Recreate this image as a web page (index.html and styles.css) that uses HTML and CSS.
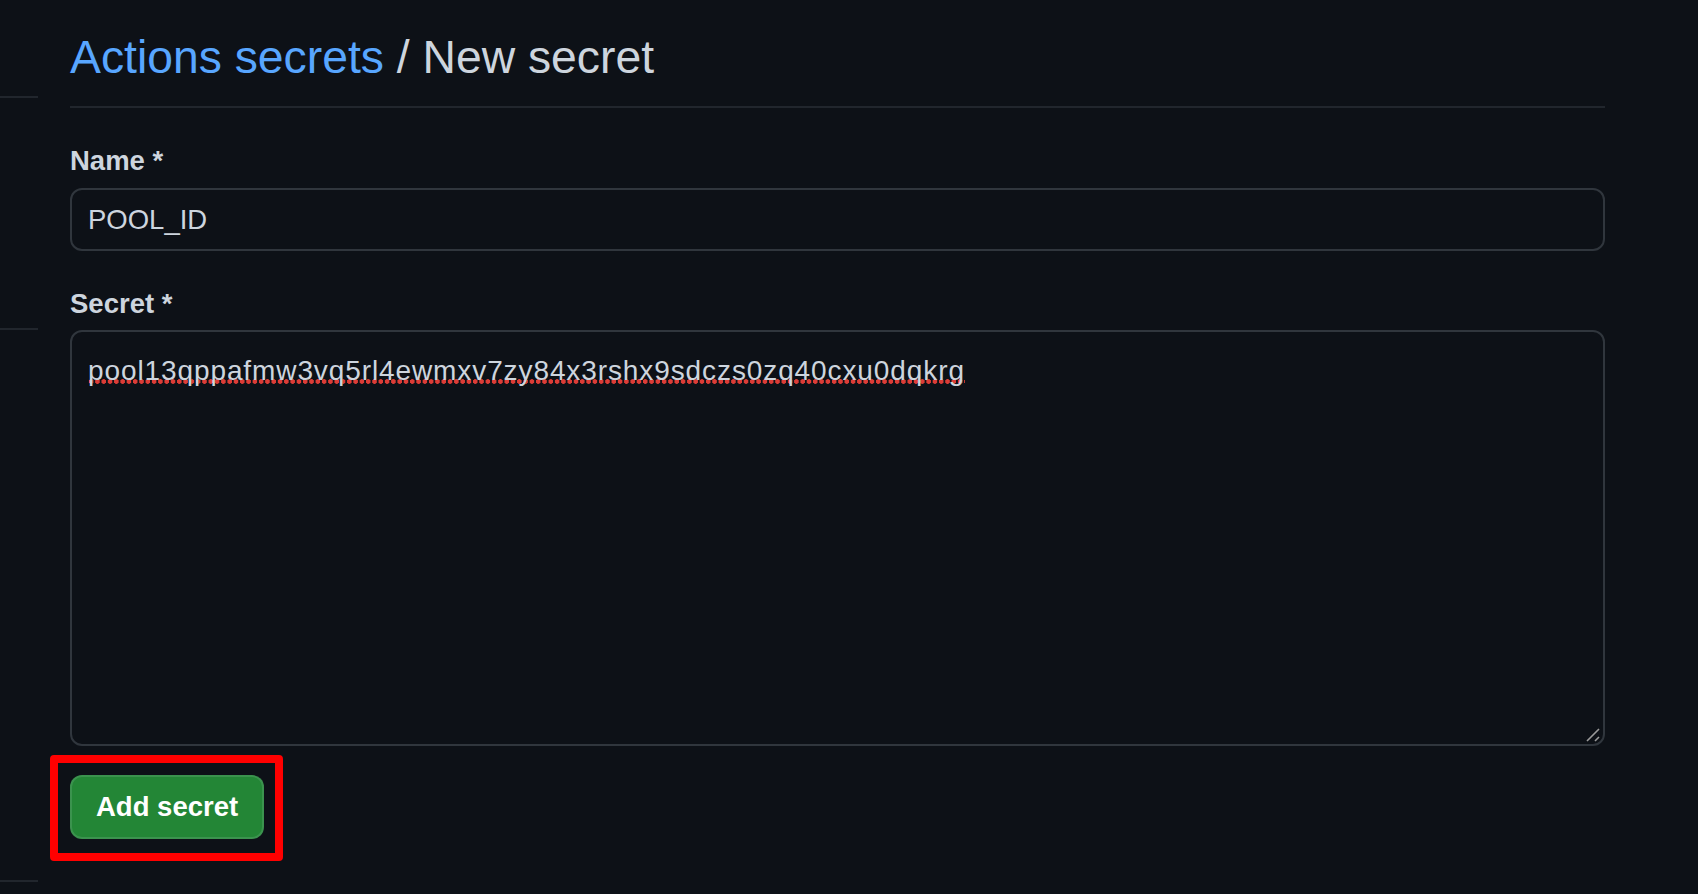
FILE: index.html
```html
<!DOCTYPE html>
<html lang="en">
<head>
<meta charset="utf-8">
<title>Actions secrets / New secret</title>
<link rel="stylesheet" href="styles.css">
</head>
<body>
<div class="page">
  <nav class="sidebar">
    <div class="nav-item nav-a"></div>
    <div class="nav-item nav-b"></div>
    <div class="nav-item nav-c"></div>
  </nav>
  <main class="main">
    <h1 class="title"><a class="title-link" href="#">Actions secrets</a> / New secret</h1>
    <form class="form">
      <div class="group">
        <label class="label">Name *</label>
        <div class="input"><span class="value">POOL_ID</span></div>
      </div>
      <div class="group">
        <label class="label">Secret *</label>
        <div class="textarea">
          <span class="value misspelled">pool13qppafmw3vq5rl4ewmxv7zy84x3rshx9sdczs0zq40cxu0dqkrg</span>
          <svg class="grip" width="16" height="16" viewBox="0 0 16 16"><path d="M2 14 L14 2 M10 14 L14 10" stroke="#9b9b9b" stroke-width="1.6" fill="none"/></svg>
        </div>
      </div>
      <div class="actions">
        <div class="highlight-wrap">
          <button type="button" class="btn">Add secret</button>
          <span class="highlight"></span>
        </div>
      </div>
    </form>
  </main>
</div>
</body>
</html>
```
FILE: styles.css
```css
html, body {
  margin: 0;
  padding: 0;
  background: #0d1117;
  height: 100%;
}
body {
  font-family: "Liberation Sans", Arial, sans-serif;
  color: #c9d1d9;
  overflow: hidden;
}
.page {
  display: flex;
  height: 894px;
}
.sidebar {
  width: 38px;
  flex: none;
  display: flex;
  flex-direction: column;
}
.nav-item {
  border-bottom: 2px solid #21262d;
}
.nav-a { height: 96px; }
.nav-b { height: 230px; }
.nav-c { height: 550px; }
.main {
  margin-left: 32px;
  width: 1535px;
  padding-top: 28px;
}
.title {
  margin: 0;
  font-size: 46.3px;
  line-height: 58px;
  font-weight: 400;
  color: #cdd5de;
  padding-bottom: 20px;
  border-bottom: 2px solid #21262d;
}
.title-link {
  color: #58a6ff;
  text-decoration: none;
}
.form {
  display: flex;
  flex-direction: column;
}
.group {
  margin-top: 35px;
  display: flex;
  flex-direction: column;
}
.label {
  font-size: 27.5px;
  font-weight: 700;
  line-height: 36px;
  color: #cdd5de;
  margin-bottom: 9px;
}
.group + .group .label {
  margin-bottom: 8px;
}
.input {
  box-sizing: border-box;
  height: 63px;
  border: 2px solid #30363d;
  border-radius: 12px;
  display: flex;
  align-items: center;
  padding: 0 16px;
  font-size: 27.5px;
  color: #cdd5de;
}
.textarea {
  position: relative;
  box-sizing: border-box;
  height: 416px;
  border: 2px solid #30363d;
  border-radius: 12px;
  padding: 18px 16px;
  font-size: 28px;
  line-height: 42px;
  color: #cdd5de;
}
.misspelled {
  letter-spacing: 0.9px;
  background-image: radial-gradient(circle, #dc3c36 2.1px, transparent 2.5px);
  background-size: 6.3px 5px;
  background-repeat: repeat-x;
  background-position: 0 calc(100% - 2.5px);
}
.grip {
  position: absolute;
  right: 2px;
  bottom: 1px;
}
.actions {
  margin-top: 29px;
  display: flex;
}
.highlight-wrap {
  position: relative;
  display: flex;
}
.btn {
  box-sizing: border-box;
  height: 64px;
  padding: 0 24px;
  background: #238636;
  border: 2px solid rgba(240, 246, 252, 0.12);
  border-radius: 12px;
  color: #ffffff;
  font-family: "Liberation Sans", Arial, sans-serif;
  font-size: 27.5px;
  font-weight: 700;
}
.highlight {
  position: absolute;
  left: -20px;
  top: -20px;
  right: -19px;
  bottom: -22px;
  border: 8px solid #ff0000;
  border-radius: 4px;
  pointer-events: none;
}
```
